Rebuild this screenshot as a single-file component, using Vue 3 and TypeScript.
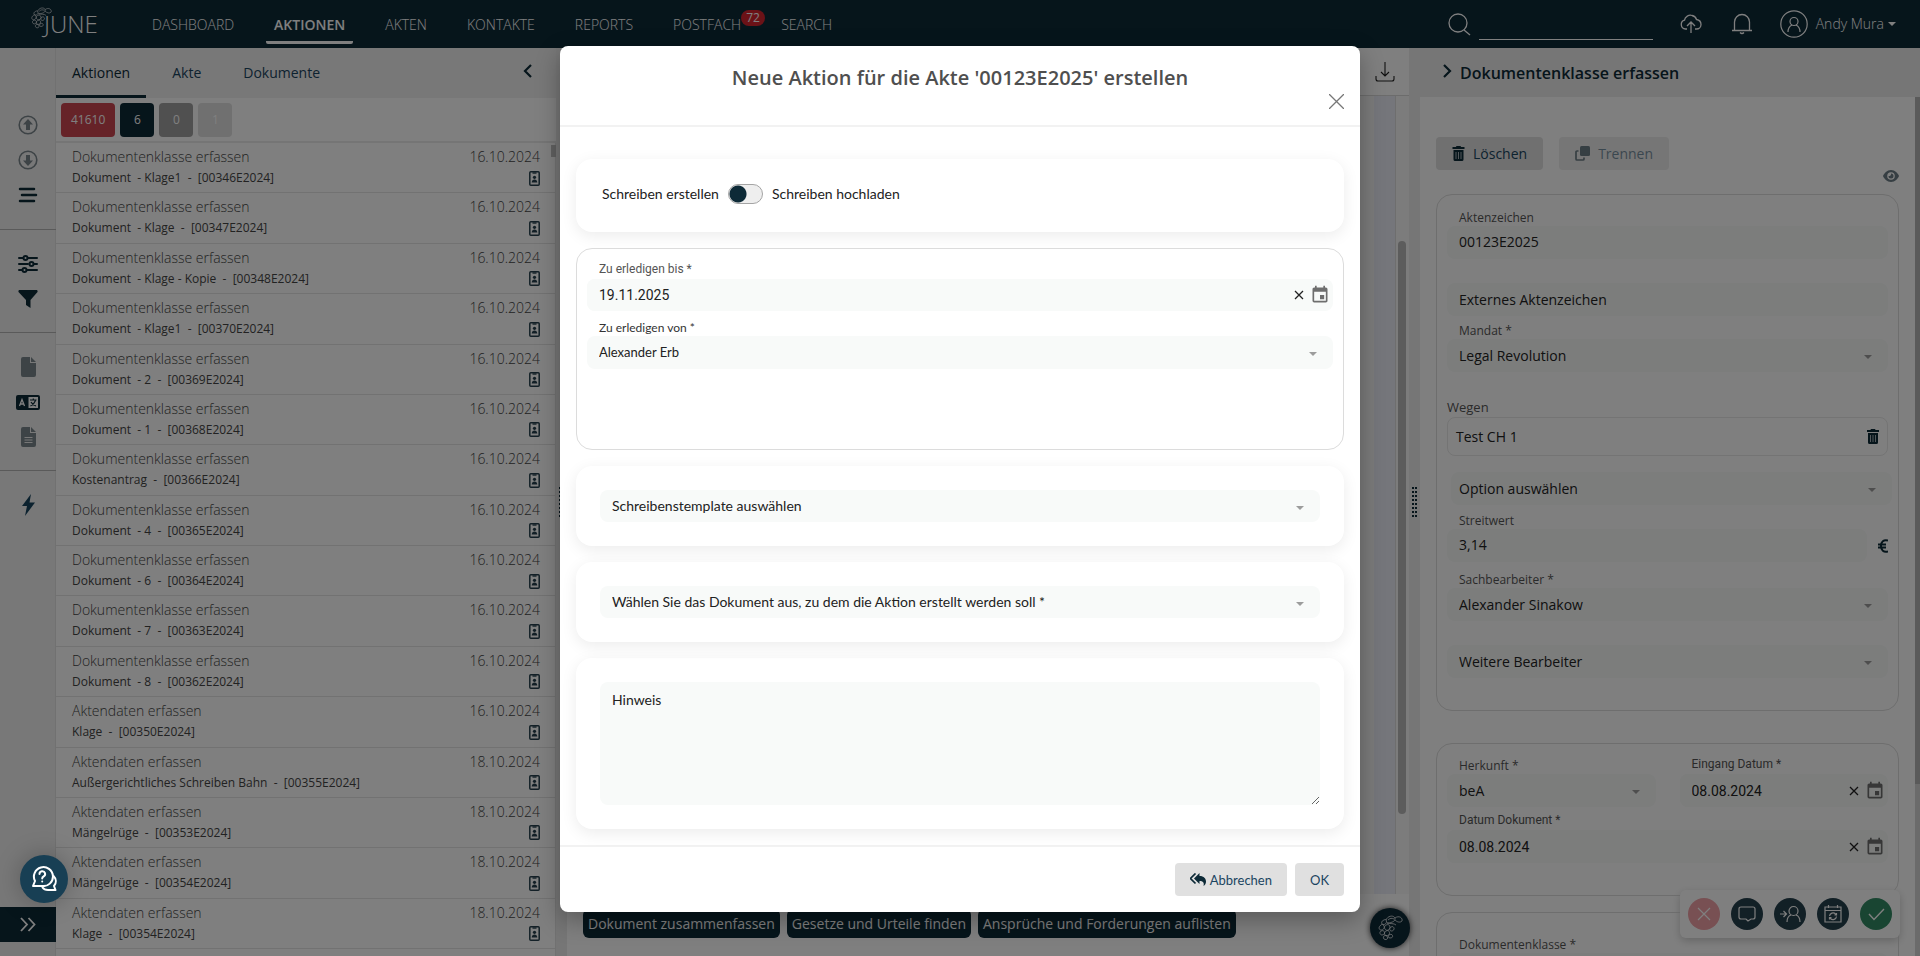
<script setup lang="ts">
import { ref } from 'vue'

interface Task {
  title: string
  info: string
  date: string
}

const navLeft: string[] = ['DASHBOARD', 'AKTIONEN', 'AKTEN', 'KONTAKTE', 'REPORTS', 'POSTFACH', 'SEARCH']
const active = ref('AKTIONEN')

const doc = 'Dokumentenklasse erfassen'
const akt = 'Aktendaten erfassen'
const tasks: Task[] = [
  { title: doc, info: 'Dokument  - Klage1  -  [00346E2024]', date: '16.10.2024' },
  { title: doc, info: 'Dokument  - Klage  -  [00347E2024]', date: '16.10.2024' },
  { title: doc, info: 'Dokument  - Klage - Kopie  -  [00348E2024]', date: '16.10.2024' },
  { title: doc, info: 'Dokument  - Klage1  -  [00370E2024]', date: '16.10.2024' },
  { title: doc, info: 'Dokument  - 2  -  [00369E2024]', date: '16.10.2024' },
  { title: doc, info: 'Dokument  - 1  -  [00368E2024]', date: '16.10.2024' },
  { title: doc, info: 'Kostenantrag  -  [00366E2024]', date: '16.10.2024' },
  { title: doc, info: 'Dokument  - 4  -  [00365E2024]', date: '16.10.2024' },
  { title: doc, info: 'Dokument  - 6  -  [00364E2024]', date: '16.10.2024' },
  { title: doc, info: 'Dokument  - 7  -  [00363E2024]', date: '16.10.2024' },
  { title: doc, info: 'Dokument  - 8  -  [00362E2024]', date: '16.10.2024' },
  { title: akt, info: 'Klage  -  [00350E2024]', date: '16.10.2024' },
  { title: akt, info: 'Außergerichtliches Schreiben Bahn  -  [00355E2024]', date: '18.10.2024' },
  { title: akt, info: 'Mängelrüge  -  [00353E2024]', date: '18.10.2024' },
  { title: akt, info: 'Mängelrüge  -  [00354E2024]', date: '18.10.2024' },
  { title: akt, info: 'Klage  -  [00354E2024]', date: '18.10.2024' },
]

const prompts: string[] = ['Dokument zusammenfassen', 'Gesetze und Urteile finden', 'Ansprüche und Forderungen auflisten']

const upload = ref(false)
const dueDate = ref('19.11.2025')
const note = ref('')
const received = ref('08.08.2024')
const documentDate = ref('08.08.2024')
</script>

<template>
  <div class="page">
    <svg class="defs" aria-hidden="true">
      <symbol id="i-cal" viewBox="0 0 24 24"><path fill="currentColor" d="M17 12h-5v5h5v-5zM16 1v2H8V1H6v2H5c-1.100 0-1.990.9-1.990 2L3 19a2 2 0 0 0 2 2h14c1.100 0 2-.9 2-2V5c0-1.100-.9-2-2-2h-1V1h-2zm3 18H5V8h14v11z" /></symbol>
      <symbol id="i-x" viewBox="0 0 10 10"><path d="M1 1l8 8M9 1l-8 8" stroke="currentColor" stroke-width="1.300" fill="none" /></symbol>
      <symbol id="i-trash" viewBox="0 0 12 15"><path fill="currentColor" d="M4 0h4l.6 1H12v2H0V1h3.400zM1 4h10v9.500a1.500 1.500 0 0 1-1.500 1.500h-7A1.500 1.500 0 0 1 1 13.500z" /><path d="M3.500 6v7M6 6v7M8.500 6v7" stroke="#fff" stroke-width=".8" opacity=".8" /></symbol>
      <symbol id="i-grape" viewBox="0 0 26 26"><g fill="none" stroke="currentColor" stroke-width=".7"><path d="M4 10c-3 2-2 5 0 5s4-2 3-4-2-2-3-1zM7 5C4 6 4 9 6 9.500S10 8 9.500 6 8 4.500 7 5zM9 10c-2 1-2 4 0 5s4-1 4-3-2-3-4-2zM4 16c-2 1-1 4 1 4s3-2 2.500-3S6 15 4 16zM9 16c-2 1-2 4 0 4.500s4-1 3.500-3S11 15 9 16zM14 12c-2 1-1.500 4 .5 4s3-2 2.500-3S16 11 14 12zM7 21c-1 1-1 3 1 3.500s3-1 2.500-2.500S8 20 7 21zM12 20c-1 1-1 3 1 3s3-1 2.500-2.500S13 19 12 20z" /><path d="M9 5c2-5 9-5 9-1 0 3-5 4-8 4M18 3c4-3 8 0 7 3-2 2-5 1-7-1M10 8c3 1 7 0 9 2M11 5c2-2 4-2 6-1" /></g></symbol>
    </svg>

    <header class="topbar">
      <a class="brand" href="#"><svg><use href="#i-grape" /></svg><span>JUNE</span></a>
      <nav>
        <a v-for="n in navLeft" :key="n" href="#" :class="{ active: n === active }" @click.prevent="active = n">{{ n }}<b v-if="n === 'POSTFACH'">72</b></a>
      </nav>
      <div class="tools">
        <label class="search">
          <svg width="23" height="23" viewBox="0 0 23 23"><g fill="none" stroke="currentColor" stroke-width="1.300"><circle cx="10" cy="10" r="9" /><path d="M16 17l6 5" /></g></svg>
          <input type="text" aria-label="Suche" />
        </label>
        <button class="plain cloud" aria-label="Hochladen"><svg width="22" height="20" viewBox="0 0 22 20"><path d="M7 15H5.500a4.500 4.500 0 0 1-1-8.800C5 2.500 9 .5 12 1.500c2.500.5 4 2.200 4.500 4C19.500 6 21 8 21 10.500S19 15 16.500 15H15M11 19V8M7 12l4-4 4 4" fill="none" stroke="currentColor" stroke-width="1.300" /></svg></button>
        <button class="plain bell" aria-label="Benachrichtigungen"><svg width="22" height="22" viewBox="0 0 22 22"><path d="M1 17.500h20M3.500 17V9a7.500 7.500 0 0 1 15 0v8M9 19.500q2 2 4 0" fill="none" stroke="currentColor" stroke-width="1.300" /></svg></button>
        <button class="plain user"><svg width="28" height="28" viewBox="0 0 28 28"><g fill="none" stroke="currentColor" stroke-width="1.200"><circle cx="14" cy="14" r="13.200" /><circle cx="14" cy="11.500" r="4" /><path d="M8 22c0-4 2-6 4-7M20 22c0-4-2-6-4-7" /></g></svg><span>Andy Mura</span><i class="caret"></i></button>
      </div>
    </header>

    <div class="body">
      <aside class="rail">
        <div class="group">
          <button class="plain mute" aria-label="Aufwärts"><svg width="20" height="20" viewBox="0 0 20 20"><circle cx="10" cy="10" r="8.800" fill="none" stroke="currentColor" stroke-width="1.600" /><path fill="currentColor" d="M10 4l5 5.500h-3V15H8V9.500H5z" /></svg></button>
          <button class="plain mute" aria-label="Abwärts"><svg width="20" height="20" viewBox="0 0 20 20"><circle cx="10" cy="10" r="8.800" fill="none" stroke="currentColor" stroke-width="1.600" /><path fill="currentColor" d="M10 16l5-5.500h-3V5H8v5.500H5z" /></svg></button>
          <button class="plain" aria-label="Liste"><svg width="20" height="16" viewBox="0 0 20 16"><path d="M2 2h14M4 8h14M2 14h14" stroke="currentColor" stroke-width="2.500" stroke-linecap="round" /></svg></button>
        </div>
        <div class="group">
          <button class="plain" aria-label="Einstellungen"><svg width="20" height="20" viewBox="0 0 20 20"><g fill="none" stroke="currentColor" stroke-width="2" stroke-linecap="round"><path d="M1 4h4M10 4h9M1 10h9M16 10h3M1 16h3M9 16h10" /><circle cx="7.500" cy="4" r="2" /><circle cx="13.500" cy="10" r="2" /><circle cx="6.500" cy="16" r="2" /></g></svg></button>
          <button class="plain" aria-label="Filter"><svg width="20" height="18" viewBox="0 0 20 18"><path fill="currentColor" d="M1 0h18q1 1 .5 2L12.500 10v8L8 15v-5L.5 2Q0 1 1 0z" /></svg></button>
        </div>
        <div class="group">
          <button class="plain mute" aria-label="Dokument"><svg width="15" height="20" viewBox="0 0 15 20"><path fill="currentColor" d="M2 0h7v6h6v12a2 2 0 0 1-2 2H2a2 2 0 0 1-2-2V2a2 2 0 0 1 2-2zM10 0l5 5h-5z" /></svg></button>
          <button class="plain" aria-label="Sprache"><svg width="24" height="15" viewBox="0 0 24 15"><rect width="24" height="15" rx="2" fill="currentColor" /><path fill="#fff" d="M12.500 2H22v11h-9.500z" /><path d="M3.500 11L6 4.500 8.500 11M4.500 9h3" stroke="#fff" stroke-width="1.300" fill="none" /><path d="M14 5h6.500M17.300 3.500V5M19.500 5.500q-1.500 4-5 5.500M15 7q1.500 3 5 4" stroke="currentColor" stroke-width="1.200" fill="none" /></svg></button>
          <button class="plain mute" aria-label="Text"><svg width="15" height="20" viewBox="0 0 15 20"><path fill="currentColor" d="M2 0h7v6h6v12a2 2 0 0 1-2 2H2a2 2 0 0 1-2-2V2a2 2 0 0 1 2-2zM10 0l5 5h-5z" /><path d="M3.500 10.500h8M3.500 13h8M3.500 15.500h8" stroke="#efefef" /></svg></button>
        </div>
        <div class="group last">
          <button class="plain bolt" aria-label="Automatisierung"><svg width="13" height="22" viewBox="0 0 13 22"><path fill="currentColor" d="M9 0L0 12h5L3 22 13 8.500H7.500z" /></svg></button>
        </div>
        <button class="expand" aria-label="Erweitern"><svg width="16" height="15" viewBox="0 0 16 15"><path d="M1 1l6 6.500L1 14M8.500 1l6 6.500-6 6.500" fill="none" stroke="currentColor" stroke-width="1.800" /></svg></button>
      </aside>

      <section class="tasks">
        <div class="tabs">
          <a href="#" class="on">Aktionen</a><a href="#">Akte</a><a href="#">Dokumente</a>
          <button class="plain" aria-label="Einklappen"><svg width="9" height="14" viewBox="0 0 9 14"><path d="M8 1L2 7l6 6" fill="none" stroke="currentColor" stroke-width="2.200" /></svg></button>
        </div>
        <div class="counts">
          <button class="red">41610</button><button class="navy">6</button><button class="grey">0</button><button class="pale">1</button>
        </div>
        <ul>
          <li v-for="(t, i) in tasks" :key="i">
            <div class="line"><span>{{ t.title }}</span><time>{{ t.date }}</time></div>
            <div class="sub"><span>{{ t.info }}</span><svg width="11" height="15" viewBox="0 0 11 15"><rect x=".8" y=".8" width="9.400" height="13.400" rx="1" fill="none" stroke="currentColor" stroke-width="1.500" /><path d="M3.500 2h4" stroke="currentColor" stroke-width="1.400" /><circle cx="5.500" cy="6.300" r="1.600" fill="currentColor" /><path d="M2.700 11.500c0-4 5.600-4 5.600 0z" fill="currentColor" /></svg></div>
          </li>
        </ul>
        <i class="thumb"></i>
      </section>

      <div class="splitter"><i></i></div>

      <main class="viewer">
        <div class="bar"><button class="plain" aria-label="Herunterladen"><svg width="20" height="20" viewBox="0 0 20 20"><path d="M10 0v14M6 10l4 4 4-4M1 14v3q0 2 2 2h14q2 0 2-2v-3" fill="none" stroke="currentColor" stroke-width="1.100" /></svg></button></div>
        <div class="canvas"><div class="sheet"></div><div class="track"><i></i></div></div>
        <div class="prompts"><button v-for="p in prompts" :key="p">{{ p }}</button></div>
        <button class="mascot" aria-label="Assistent"><svg><use href="#i-grape" /></svg></button>
      </main>

      <div class="splitter"><i></i></div>

      <section class="detail">
        <h2><svg width="9" height="14" viewBox="0 0 9 14"><path d="M1 1l6 6-6 6" fill="none" stroke="currentColor" stroke-width="2.200" /></svg>Dokumentenklasse erfassen</h2>
        <div class="scroll">
          <div class="acts">
            <button><svg width="13" height="15"><use href="#i-trash" /></svg>Löschen</button>
            <button disabled><svg width="15" height="15" viewBox="0 0 15 15"><rect x="5" width="10" height="10" rx="1.500" fill="currentColor" /><path d="M3.500 5H2a1 1 0 0 0-1 1v7a1 1 0 0 0 1 1h6a1 1 0 0 0 1-1v-1.500" fill="none" stroke="currentColor" stroke-width="1.700" /></svg>Trennen</button>
          </div>
          <div class="eye"><svg width="16" height="12" viewBox="0 0 16 12"><path fill="currentColor" d="M8 0c4 0 7 3.500 8 6-1 2.500-4 6-8 6S1 8.500 0 6c1-2.500 4-6 8-6z" /><circle cx="8" cy="6" r="3.800" fill="#fff" /><path fill="currentColor" d="M8 3.500A2.500 2.500 0 1 1 5.500 6 2 2 0 0 0 8 3.500z" /></svg></div>

          <div class="card">
            <div class="field"><label for="az">Aktenzeichen</label><input id="az" type="text" value="00123E2025" /></div>
            <div class="field"><span class="gap"></span><input type="text" aria-label="Externes Aktenzeichen" placeholder="Externes Aktenzeichen" /></div>
            <div class="field sel tight"><label for="md">Mandat *</label><select id="md"><option>Legal Revolution</option></select></div>
            <div class="reason"><h3>Wegen</h3><div>Test CH 1<button class="plain" aria-label="Löschen"><svg width="12" height="15"><use href="#i-trash" /></svg></button></div></div>
            <div class="sel option"><select aria-label="Option"><option>Option auswählen</option></select></div>
            <div class="field amount"><label for="sw">Streitwert</label><div><input id="sw" type="text" value="3,14" /><svg width="10" height="14" viewBox="0 0 10 14"><path d="M10 1.600C5.500.4 3 3 3 7s2.500 6.600 7 5.400M0 5.500h8M0 8.500h8" fill="none" stroke="currentColor" stroke-width="2" /></svg></div></div>
            <div class="field sel"><label for="sb">Sachbearbeiter *</label><select id="sb"><option>Alexander Sinakow</option></select></div>
            <div class="field sel"><span class="gap"></span><select aria-label="Weitere Bearbeiter"><option>Weitere Bearbeiter</option></select></div>
          </div>

          <div class="card second">
            <div class="cols">
              <div class="field sel"><label for="hk">Herkunft *</label><select id="hk"><option>beA</option></select></div>
              <div class="field date"><label for="ed">Eingang Datum *</label><div class="datebox"><input id="ed" v-model="received" type="text" /><button class="plain" aria-label="Leeren" @click="received = ''"><svg width="10" height="10"><use href="#i-x" /></svg></button><button class="plain" aria-label="Kalender"><svg width="20" height="20"><use href="#i-cal" /></svg></button></div></div>
            </div>
            <div class="field date"><label for="dd">Datum Dokument *</label><div class="datebox"><input id="dd" v-model="documentDate" type="text" /><button class="plain" aria-label="Leeren" @click="documentDate = ''"><svg width="10" height="10"><use href="#i-x" /></svg></button><button class="plain" aria-label="Kalender"><svg width="20" height="20"><use href="#i-cal" /></svg></button></div></div>
          </div>

          <div class="card third"><div class="field"><label for="dk">Dokumentenklasse *</label><input id="dk" type="text" /></div></div>
        </div>
        <i class="track2"><i></i></i>
        <div class="actions">
          <button class="no" aria-label="Ablehnen"><svg width="14" height="14" viewBox="0 0 14 14"><path d="M1 1l12 12M13 1L1 13" stroke="currentColor" stroke-width="1.200" /></svg></button>
          <button aria-label="Kommentar"><svg width="18" height="16" viewBox="0 0 18 16"><path d="M3 1h12q2 0 2 2v8q0 2-2 2h-2l-3 2-2-2H3q-2 0-2-2V3q0-2 2-2z" fill="none" stroke="currentColor" stroke-width="1.200" /></svg></button>
          <button aria-label="Zuweisen"><svg width="22" height="18" viewBox="0 0 22 18"><g fill="none" stroke="currentColor" stroke-width="1.200"><circle cx="14.500" cy="6" r="4.500" /><path d="M12 10c-3 1-4 4-4 7M17 10c3 1 4 4 4 7M1 9h6M4.500 6l3 3-3 3" /></g></svg></button>
          <button aria-label="Wiedervorlage"><svg width="18" height="18" viewBox="0 0 18 18"><g fill="none" stroke="currentColor" stroke-width="1.200"><path d="M1 2h16v15H1zM1 5.500h16M4.500 0v3M13.500 0v3M5.500 11a3.500 3.500 0 0 1 6-2l1 1M12.500 11.500a3.500 3.500 0 0 1-6 2l-1-1M12.500 8v2h-2M5.500 14.500v-2h2" /></g></svg></button>
          <button class="yes" aria-label="Bestätigen"><svg width="17" height="13" viewBox="0 0 17 13"><path d="M1 6l5 5.500L16 1" fill="none" stroke="currentColor" stroke-width="1.400" /></svg></button>
        </div>
      </section>
    </div>

    <div class="overlay">
      <form class="modal" role="dialog" aria-modal="true" aria-labelledby="mt" @submit.prevent>
        <div class="head">
          <h1 id="mt">Neue Aktion für die Akte '00123E2025' erstellen</h1>
          <button type="button" class="plain" aria-label="Schließen"><svg width="15" height="15" viewBox="0 0 15 15"><path d="M0 0l15 15M15 0L0 15" stroke="currentColor" stroke-width="1.300" /></svg></button>
        </div>
        <div class="content">
          <div class="box toggle"><span>Schreiben erstellen</span><input v-model="upload" type="checkbox" role="switch" aria-label="Schreiben hochladen" /><span>Schreiben hochladen</span></div>
          <div class="box lined">
            <div class="field date"><label for="zb">Zu erledigen bis *</label><div class="datebox"><input id="zb" v-model="dueDate" type="text" /><button type="button" class="plain" aria-label="Leeren" @click="dueDate = ''"><svg width="10" height="10"><use href="#i-x" /></svg></button><button type="button" class="plain" aria-label="Kalender"><svg width="20" height="20"><use href="#i-cal" /></svg></button></div></div>
            <div class="field sel who"><label for="zv">Zu erledigen von *</label><select id="zv"><option>Alexander Erb</option></select></div>
          </div>
          <div class="box sel"><select aria-label="Schreibenstemplate"><option>Schreibenstemplate auswählen</option></select></div>
          <div class="box sel"><select aria-label="Dokument"><option>Wählen Sie das Dokument aus, zu dem die Aktion erstellt werden soll *</option></select></div>
          <div class="box"><textarea v-model="note" aria-label="Hinweis" placeholder="Hinweis"></textarea></div>
        </div>
        <div class="foot">
          <button type="button"><svg width="16" height="13" viewBox="0 0 16 13"><path fill="currentColor" d="M9.500 0v3c4.500 0 6.500 2.500 6.500 5.500 0 2-1 3.500-2.500 4.500 1-3.500-.5-5-4-5v3L4 5.500z" /><path d="M5.500.5l-5 5 5 5" fill="none" stroke="currentColor" stroke-width="1.700" /></svg>Abbrechen</button>
          <button type="submit">OK</button>
        </div>
      </form>
    </div>

    <button class="help" aria-label="Hilfe"><svg width="26" height="26" viewBox="0 0 26 26"><g fill="none" stroke="currentColor" stroke-width="2" stroke-linejoin="round" stroke-linecap="round"><path d="M4 15A9.500 9.500 0 1 1 11 20H2l2-5z" /><path d="M22.500 10c3 3 3 7 .5 10l1.500 4H17c-2.500 0-4.500-1-5.500-2.500" /><path d="M8.500 8a2.800 2.800 0 1 1 4 2.500c-1 .5-1.300 1-1.300 2M11.200 15.500v.1" /></g></svg></button>
  </div>
</template>

<style>
html,
body {
  margin: 0;
  background: #fff;
}
</style>

<style scoped>
* {
  box-sizing: border-box;
}
.page {
  --navy: #0d2a37;
  --field: #f8faf9;
  position: relative;
  height: 100vh;
  min-height: 956px;
  display: flex;
  flex-direction: column;
  overflow: hidden;
  font: 14px/20px 'Open Sans', 'Noto Sans', sans-serif;
  color: #222;
}
.defs {
  display: none;
}
a {
  text-decoration: none;
  color: inherit;
}
button,
input,
select,
textarea {
  font: inherit;
  color: inherit;
  border: 0;
  outline: 0;
}
svg {
  display: block;
  flex: none;
}
.plain {
  background: none;
  padding: 0;
  display: flex;
  align-items: center;
  justify-content: center;
}
.topbar {
  height: 48px;
  flex: none;
  background: var(--navy);
  color: #fff;
  display: flex;
  align-items: center;
  font-weight: 300;
}
.brand {
  position: relative;
  width: 50px;
  margin-left: 44px;
  font-size: 24px;
  line-height: 48px;
}
.brand svg {
  position: absolute;
  left: -14px;
  top: 7px;
  width: 22px;
  height: 22px;
}
nav {
  display: flex;
  gap: 24px;
  margin-left: 50px;
}
nav a {
  position: relative;
  padding: 11px 8px 6px;
  line-height: 20px;
  border-bottom: 3px solid transparent;
  border-radius: 2px;
}
nav a.active {
  font-weight: 600;
  border-color: #fff;
}
nav b {
  position: absolute;
  left: calc(100% - 8px);
  top: 6px;
  height: 16px;
  padding: 0 5px;
  border-radius: 8px;
  background: #d6242f;
  font: 400 12px/16px 'Open Sans', sans-serif;
}
.tools {
  margin-left: auto;
  margin-right: 24px;
  display: flex;
  align-items: center;
}
.search {
  display: flex;
  align-items: center;
  gap: 8px;
}
.search input {
  width: 174px;
  height: 32px;
  background: none;
  border-bottom: 1px solid #fff;
}
.cloud {
  margin-left: 27px;
}
.bell {
  margin-left: 29px;
}
.user {
  margin-left: 27px;
  gap: 8px;
  font-weight: 300;
}
.caret {
  margin-left: -4px;
  border: 4px solid transparent;
  border-top-color: currentColor;
  border-bottom: 0;
}
.body {
  flex: 1;
  min-height: 0;
  display: grid;
  grid-template-columns: 56px 500px 11px minmax(0, 1fr) 11px 500px;
}
.rail {
  background: #f0f0f0;
  display: flex;
  flex-direction: column;
  color: var(--navy);
  box-shadow: inset -1px 0 #e2e2e2;
  padding-bottom: 14px;
}
.group {
  display: flex;
  flex-direction: column;
  align-items: center;
  gap: 15px;
  padding: 24px 0 23px;
  border-bottom: 1px solid #b4b4b4;
}
.group:first-child {
  padding: 67px 0 24px;
}
.group button {
  height: 20px;
}
.group.last {
  border: 0;
}
.mute {
  color: #7b868c;
}
.bolt {
  color: #18455f;
}
.expand {
  margin-top: auto;
  height: 35px;
  background: var(--navy);
  color: #fff;
  display: flex;
  align-items: center;
  justify-content: center;
}
.tasks {
  position: relative;
  display: flex;
  flex-direction: column;
  min-height: 0;
  color: #444;
}
.tabs {
  height: 50px;
  flex: none;
  display: flex;
  align-items: center;
  background: #f0f0f0;
  color: #1b4560;
}
.tabs a {
  padding: 2px 21px 0;
  line-height: 45px;
  border-bottom: 3px solid transparent;
}
.tabs a.on {
  padding: 2px 16px 0;
  margin-right: 5px;
  color: var(--navy);
  border-color: var(--navy);
}
.tabs button {
  margin: 0 24px 5px auto;
  color: var(--navy);
}
.counts {
  display: flex;
  gap: 5px;
  padding: 5px 5px 4px;
  border-bottom: 2px solid #ebebeb;
}
.counts button {
  height: 34px;
  min-width: 34px;
  padding: 0 10px;
  border-radius: 4px;
  color: #fff;
  font-size: 12px;
}
.red {
  background: #cc4650;
}
.navy {
  background: var(--navy);
}
.grey {
  background: #a0a0a0;
}
.pale {
  background: #e0e0e0;
}
.tasks ul {
  list-style: none;
  flex: 1;
  margin: 0;
  padding: 0 0 7px;
  display: flex;
  flex-direction: column;
  border-right: 1px solid #e2e2e2;
}
.tasks li {
  flex: 1;
  padding: 3px 15px 0 16px;
  border-bottom: 1px solid #e4e4e4;
  white-space: pre;
}
.line,
.sub {
  display: flex;
  justify-content: space-between;
  align-items: center;
}
.line {
  font-weight: 300;
  line-height: 22px;
}
.sub {
  font-size: 12px;
  line-height: 20px;
}
.sub svg {
  color: #26414e;
}
.thumb {
  position: absolute;
  right: 0;
  top: 97px;
  width: 5px;
  height: 12px;
  background: #c0c0c0;
}
.splitter {
  background: #ececec;
  display: flex;
  align-items: center;
  justify-content: center;
}
.splitter i {
  width: 5px;
  height: 30px;
  background: repeating-linear-gradient(90deg, transparent 0 2px, #ececec 2px 3px), repeating-linear-gradient(var(--navy) 0 2px, #ececec 2px 4px);
}
.viewer {
  position: relative;
  display: flex;
  flex-direction: column;
  min-height: 0;
}
.bar {
  height: 48px;
  flex: none;
  display: flex;
  align-items: center;
  justify-content: flex-end;
  padding-right: 14px;
  border-bottom: 1px solid #d8d8d8;
}
.canvas {
  flex: 1;
  display: flex;
  background: #ebedf6;
}
.sheet {
  flex: 1;
  margin-right: 21px;
  background: #f6f6f6;
}
.track {
  width: 14px;
  padding: 145px 3px 80px 2px;
  background: #f8f8f8;
  border-left: 1px solid #dcdcdc;
}
.track i {
  display: block;
  height: 100%;
  border-radius: 4px;
  background: #b9b9b9;
}
.prompts {
  height: 62px;
  display: flex;
  gap: 7px;
  align-items: flex-start;
  padding: 15px 16px;
}
.prompts button {
  height: 29px;
  padding: 0 5px;
  border-radius: 6px;
  background: var(--navy);
  color: #fff;
}
.mascot {
  position: absolute;
  right: -1px;
  bottom: 8px;
  width: 40px;
  height: 40px;
  padding: 7px;
  border-radius: 50%;
  background: var(--navy);
  color: #fff;
  box-shadow: 0 0 6px #333;
}
.mascot svg {
  width: 26px;
  height: 26px;
}
.detail {
  position: relative;
  display: flex;
  flex-direction: column;
  min-height: 0;
}
.detail h2 {
  height: 49px;
  flex: none;
  margin: 0;
  display: flex;
  align-items: center;
  gap: 8px;
  padding-left: 23px;
  background: #ededed;
  color: var(--navy);
  font-size: 16px;
  font-weight: 600;
}
.detail h2 svg {
  margin-bottom: 4px;
}
.scroll {
  flex: 1;
  min-height: 0;
  overflow: hidden;
  padding: 40px 21px 0 16px;
}
.acts {
  display: flex;
  gap: 16px;
}
.acts button {
  height: 33px;
  padding: 0 16px;
  display: flex;
  align-items: center;
  gap: 8px;
  border-radius: 4px;
  background: #e0e0e0;
  color: #18455f;
}
.acts svg {
  color: var(--navy);
}
.acts button:disabled {
  opacity: 0.6;
}
.eye {
  height: 24px;
  display: flex;
  justify-content: flex-end;
  color: #6d7d86;
}
.card {
  border: 1px solid #dcdcdc;
  border-radius: 16px;
  padding: 7px 10px 32px;
}
.field {
  display: flex;
  flex-direction: column;
  padding-top: 8px;
}
.field label,
.gap {
  height: 16px;
  padding-left: 12px;
  font-size: 12px;
  line-height: 16px;
  color: #555;
}
.tight {
  padding-top: 7px;
}
.card input,
.card select,
.modal input[type='text'],
.modal select {
  width: 100%;
  height: 33px;
  padding: 0 12px;
  border-radius: 8px;
  background: var(--field);
  appearance: none;
}
.card .field input[value] {
  padding-bottom: 3px;
}
.card ::placeholder {
  color: #222;
  opacity: 1;
}
.sel {
  position: relative;
}
.sel::after {
  content: '';
  position: absolute;
  right: 16px;
  bottom: 13px;
  border: 4px solid transparent;
  border-top-color: #9c9c9c;
  border-bottom: 0;
}
.reason {
  padding-top: 25px;
}
.reason h3 {
  margin: 0;
  font-size: 13px;
  line-height: 20px;
  font-weight: 400;
  color: #555;
}
.reason div {
  height: 39px;
  display: flex;
  align-items: center;
  justify-content: space-between;
  padding: 0 8px;
  border: 1px solid #e8e8e8;
  border-radius: 8px;
}
.reason button {
  color: var(--navy);
}
.option {
  margin: 16px -4px 0 4px;
}
.card .option select {
  padding-left: 8px;
  display: block;
}
.amount {
  padding-bottom: 2px;
}
.amount div {
  display: flex;
  align-items: center;
  gap: 11px;
  color: var(--navy);
}
.amount input {
  color: #222;
}
.datebox {
  display: flex;
  align-items: center;
  gap: 6px;
  padding-right: 3px;
  border-radius: 8px;
  background: var(--field);
  color: #6e6e6e;
}
.datebox input {
  flex: 1;
  min-width: 0;
  color: #222;
}
.datebox button:nth-of-type(1) {
  color: #222;
}
.date,
.date label {
  font-family: Roboto, sans-serif;
}
.second {
  margin-top: 32px;
}
.second .field {
  padding-top: 7px;
}
.second .date {
  padding-top: 5px;
}
.date label {
  height: 18px;
}
.cols {
  display: grid;
  grid-template-columns: 1fr 1fr;
  gap: 24px;
}
.third {
  margin-top: 16px;
  padding-top: 16px;
}
.track2 {
  position: absolute;
  right: 0;
  top: 49px;
  bottom: 0;
  width: 5px;
  background: #d6d6d6;
}
.track2 i {
  display: block;
  height: 80%;
  background: #b4b4b4;
}
.actions {
  position: absolute;
  right: 20px;
  bottom: 18px;
  height: 48px;
  display: flex;
  align-items: center;
  gap: 11px;
  padding: 0 8px;
  border-radius: 6px;
  background: #fff;
  box-shadow: 0 3px 8px #ccc;
}
.actions button {
  width: 32px;
  height: 32px;
  padding: 0;
  display: grid;
  place-items: center;
  border-radius: 50%;
  background: #25404d;
  color: #fff;
}
.actions .no {
  background: #f0a0a6;
}
.actions .yes {
  background: #338a64;
}
.overlay {
  position: absolute;
  inset: 0;
  display: flex;
  justify-content: center;
  align-items: flex-start;
  padding-top: 46px;
  background: rgba(0, 0, 0, 0.5);
}
.modal {
  width: 800px;
  max-width: 100%;
  border-radius: 8px;
  background: #fff;
  box-shadow: 0 8px 24px rgba(0, 0, 0, 0.3);
  font-family: Lato, sans-serif;
  font-size: 14px;
}
.head {
  position: relative;
  height: 81px;
  padding-top: 16px;
  border-bottom: 2px solid #f2f2f2;
}
.head h1 {
  margin: 0;
  text-align: center;
  font: 600 20px/32px 'Open Sans', sans-serif;
  color: #4f4f4f;
}
.head button {
  position: absolute;
  right: 16px;
  top: 48px;
  color: #777;
}
.content {
  padding: 32px 16px 16px;
  display: flex;
  flex-direction: column;
  gap: 16px;
}
.box {
  border-radius: 16px;
  padding: 24px;
  background: #fff;
  box-shadow: 0 4px 16px rgba(0, 0, 0, 0.08);
}
.toggle {
  display: flex;
  align-items: center;
  gap: 9px;
  height: 73px;
  padding: 0 26px 3px;
}
.toggle input {
  width: 35px;
  height: 20px;
  margin: 0;
  border: 1px solid #a4a4a4;
  border-radius: 10px;
  appearance: none;
  background: radial-gradient(circle at 9px 9px, var(--navy) 0 8px, #eee 9px);
}
.toggle input:checked {
  background: radial-gradient(circle at 24px 9px, var(--navy) 0 8px, #eee 9px);
}
.lined {
  height: 202px;
  padding: 3px 10px 0;
  border: 1px solid #dcdcdc;
  box-shadow: none;
}
.lined .date {
  padding-top: 9px;
}
.lined .datebox {
  margin-bottom: 1px;
}
.modal .datebox input[type='text'] {
  height: 32px;
}
.who {
  font-size: 13px;
}
.who label {
  color: #333;
}
.modal .who select {
  padding-bottom: 2px;
}
.box.sel::after {
  right: 40px;
  bottom: 36px;
}
.box.sel select {
  display: block;
  height: 32px;
}
.modal textarea {
  display: block;
  width: 100%;
  height: 123px;
  padding: 8px 12px;
  border-radius: 8px;
  background: var(--field);
  resize: vertical;
}
.modal ::placeholder {
  color: #222;
  opacity: 1;
}
.foot {
  display: flex;
  justify-content: flex-end;
  gap: 8px;
  padding: 16px;
  border-top: 2px solid #f2f2f2;
  font-size: 13px;
}
.foot button {
  height: 33px;
  padding: 0 15px;
  display: flex;
  align-items: center;
  gap: 4px;
  border-radius: 4px;
  background: #e0e0e0;
  color: #1b4560;
}
.foot svg {
  color: var(--navy);
}
.help {
  position: absolute;
  left: 20px;
  bottom: 53px;
  width: 48px;
  height: 48px;
  padding: 0;
  display: grid;
  place-items: center;
  border-radius: 50%;
  background: #183f54;
  color: #fff;
  box-shadow: 0 0 24px rgba(0, 0, 0, 0.25);
}
</style>
